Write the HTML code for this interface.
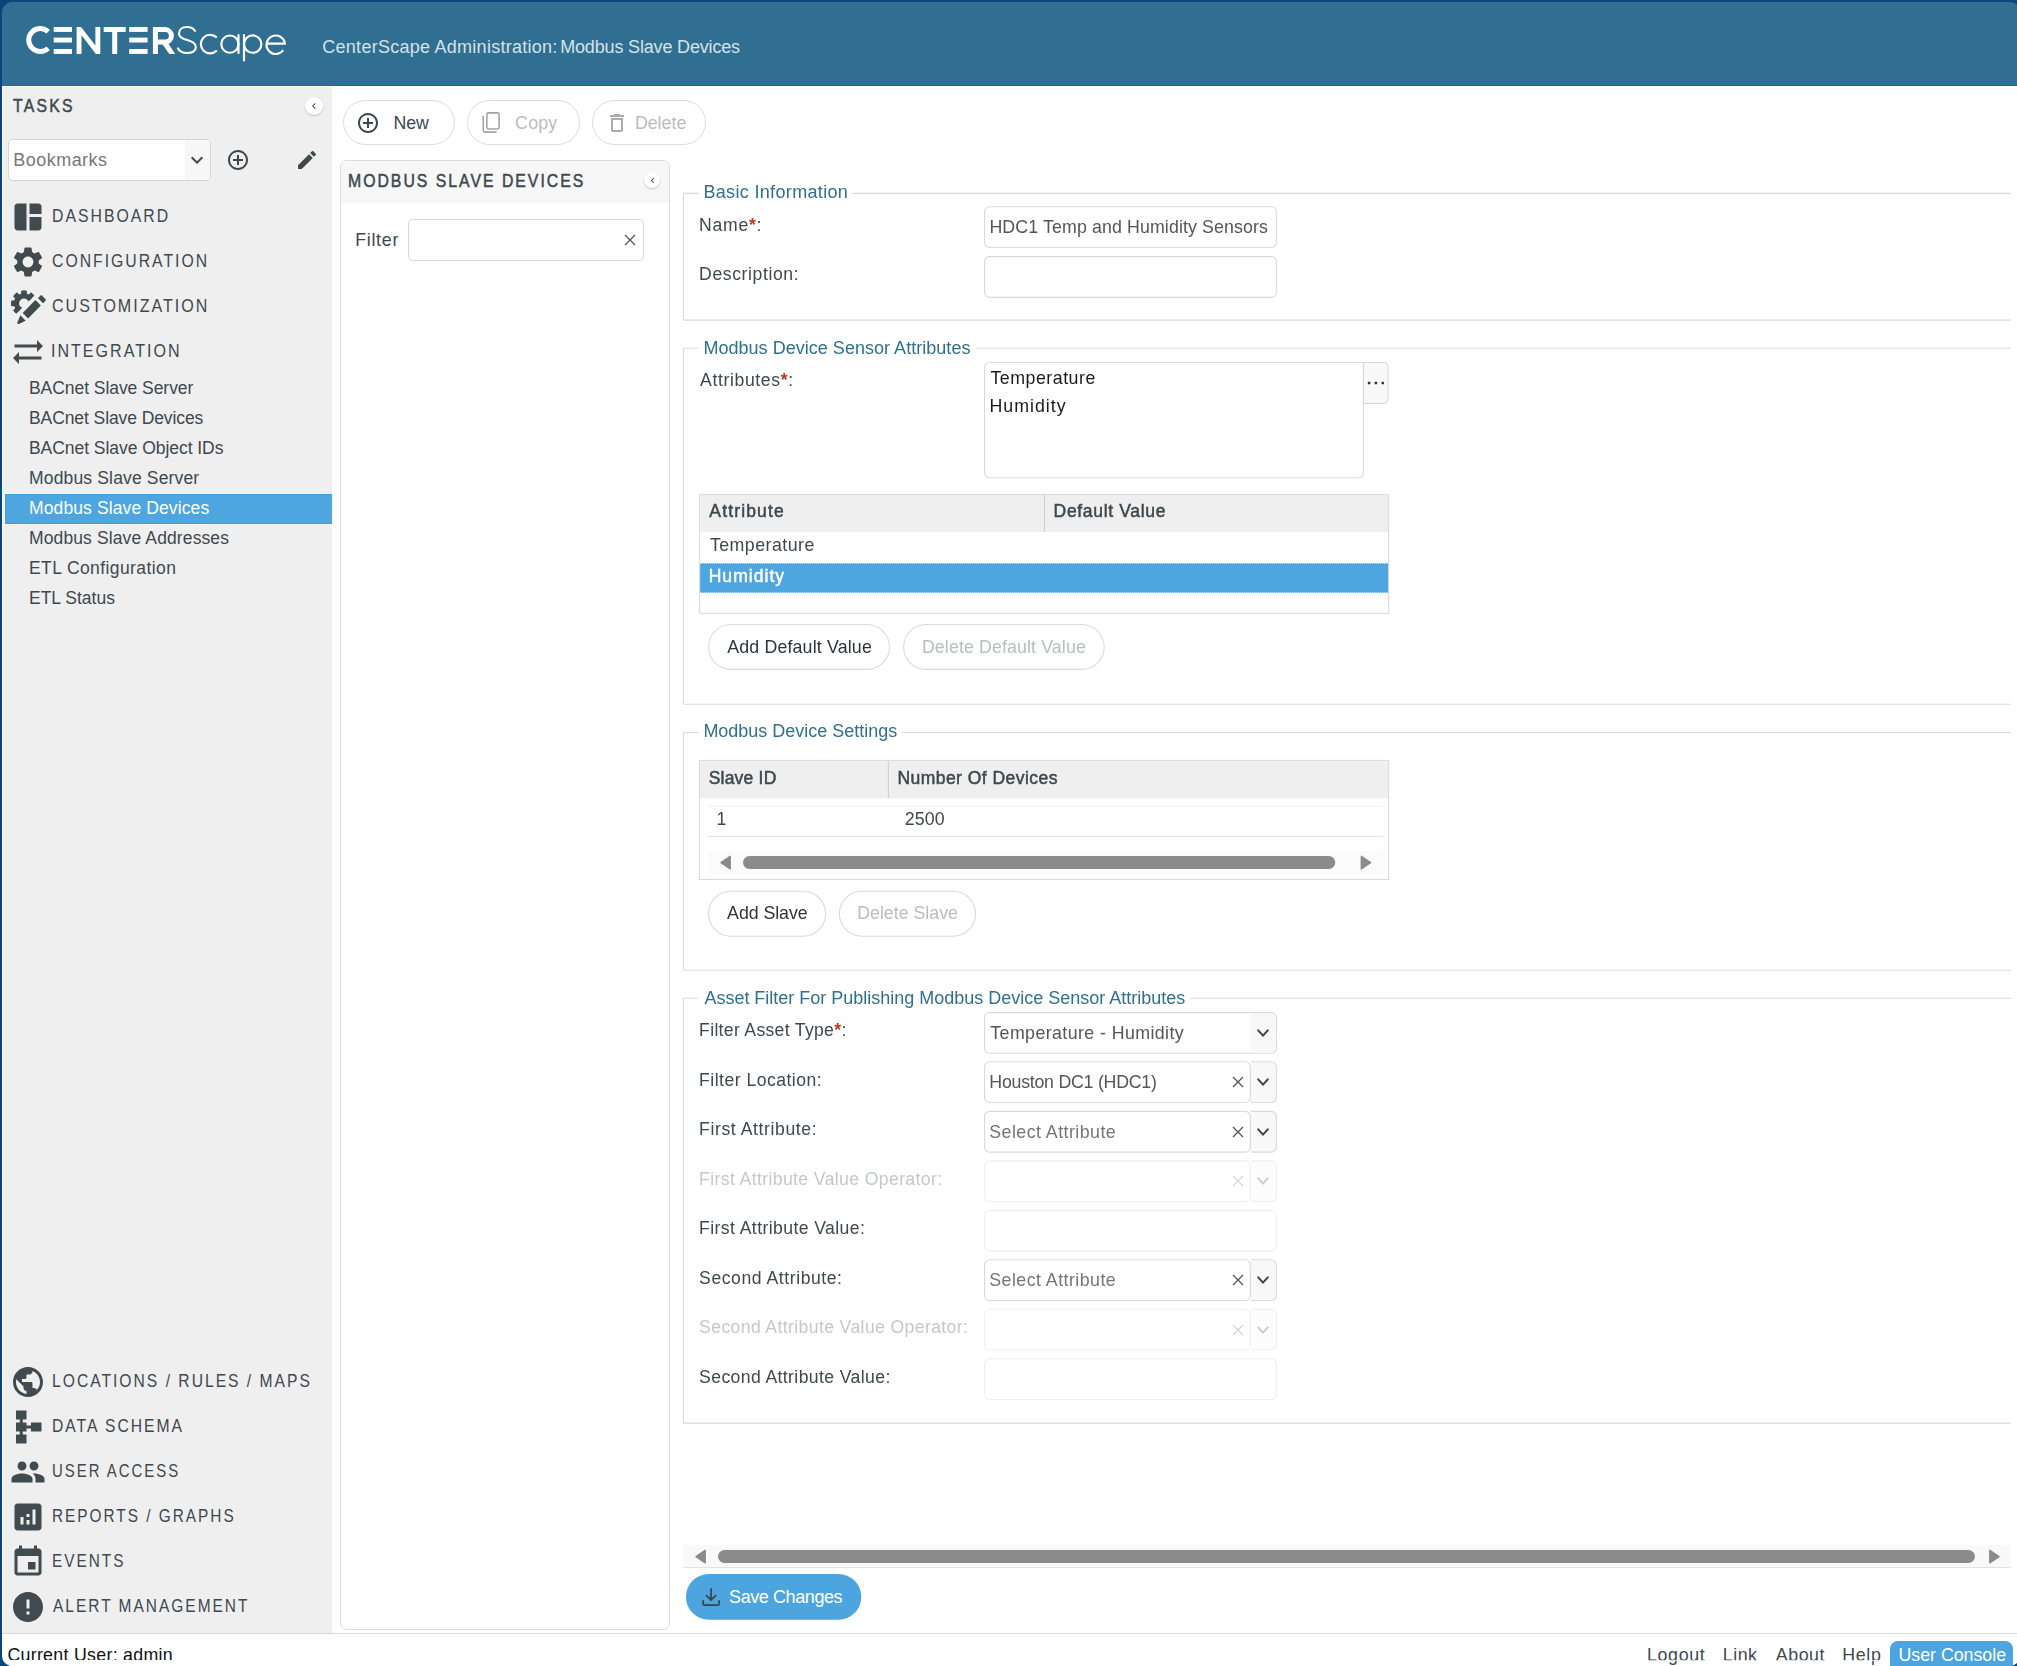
<!DOCTYPE html>
<html>
<head>
<meta charset="utf-8">
<title>CenterScape Administration: Modbus Slave Devices</title>
<style>
*{box-sizing:border-box;margin:0;padding:0}
html,body{width:2017px;height:1666px;overflow:hidden;background:#0b457a;font-family:"Liberation Sans",sans-serif;color:#3d484f}
#frame{position:absolute;left:2px;top:40px;width:2018px;height:1626px;background:#fff;border-radius:0 0 10px 10px}
#app{position:absolute;left:0;top:0;width:2017px;height:1666px;overflow:hidden}
.abs{position:absolute}
.t{position:absolute;white-space:nowrap;line-height:20px}
#hdr{position:absolute;left:2px;top:2px;width:2018px;height:84px;background:#306f91;border-bottom:1px solid #2a6686;border-radius:10px 10px 0 0}
#side{position:absolute;left:2px;top:86px;width:330px;height:1547px;background:#efefef}
.pill{position:absolute;height:45px;border:1px solid #dcdcdc;border-radius:23px;background:#fff}
.inp{position:absolute;border:1px solid #d6d6d6;border-radius:5px;background:#fff}
.req{color:#c03a1e;font-weight:bold}
</style>
</head>
<body>
<div id="frame"></div>
<div id="app">
<div id="hdr"></div>
<svg class="abs" style="left:0;top:0" width="320" height="86" viewBox="0 0 320 86">
<g fill="#fff" stroke="none">
<rect x="53.7" y="27" width="18.3" height="4.9"/><rect x="53.7" y="37.6" width="18.3" height="4.9"/><rect x="53.7" y="49" width="18.3" height="4.9"/>
<path d="M76.6 53.9V27.1h4.5L95.4 45.6V27.1h4.9V53.9h-4.4L81.5 35.3V53.9z"/>
<path d="M103.7 27.1h22v4.9h-8.5v21.9h-5v-21.9h-8.5z"/>
<rect x="129.2" y="27" width="18.4" height="4.9"/><rect x="129.2" y="37.6" width="18.4" height="4.9"/><rect x="129.2" y="49" width="18.4" height="4.9"/>
<path d="M161.8 43.2L167.6 42.4L175.2 53.9H169.3z"/>
</g>
<g fill="none" stroke="#fff">
<path d="M48.2 31.7A11.5 11.5 0 1 0 48.2 48.3" stroke-width="5"/>
<path d="M155.4 53.9V29.6H165.2a6.2 6.2 0 0 1 0 12.4H155.4" stroke-width="5" stroke-linejoin="miter"/>
<g stroke-width="2.15">
<path d="M195.4 31.6C194 28.6 191 27 187 27C182.3 27 179 29.6 179 33.4C179 37.4 182.6 38.8 187.2 40C192.2 41.3 195.8 43 195.8 47C195.8 51 192 53 187.2 53C182.5 53 179 51 177.6 47.6"/>
<path d="M216.8 37.6A9.3 9.3 0 1 0 216.8 50.6"/>
<circle cx="229.9" cy="44.1" r="8.6"/><path d="M238.5 34.3V53.9"/>
<path d="M244 34.3V61.3"/><circle cx="252.7" cy="44.1" r="8.7"/>
<path d="M266.6 43.6H284.9A9.2 9.2 0 1 0 283.2 50.2"/>
</g></g>
</svg>
<div class="t" style="left:322.30px;top:37.00px;font-size:18px;letter-spacing:0.265px;color:#d5e2ea;">CenterScape Administration:</div>
<div class="t" style="left:560.20px;top:37.00px;font-size:18px;letter-spacing:-0.168px;color:#d5e2ea;">Modbus Slave Devices</div>
<div id="side"></div>
<div class="abs" style="left:2px;top:86px;width:330px;height:1px;background:#faf7f5"></div>
<div class="abs" style="left:2px;top:86px;width:1px;height:1547px;background:#fcf9f7"></div>
<div class="t" style="left:12.80px;top:96.00px;font-size:18.6px;letter-spacing:2.586px;transform:scaleX(0.8508);transform-origin:0 0;-webkit-text-stroke:0.5px #3d484f;color:#3d484f;">TASKS</div>
<div class="abs" style="left:305px;top:96.5px;width:18px;height:18px;border-radius:9px;background:#fff;box-shadow:0 1px 2px rgba(0,0,0,.2)"></div>
<svg class="abs" style="left:308px;top:99.5px" width="12" height="12" viewBox="0 0 24 24"><path d="M15.4 7.4L14 6l-6 6 6 6 1.4-1.4L10.8 12z" fill="#3d484f"/></svg>
<div class="inp" style="left:8px;top:139px;width:203px;height:42px;overflow:hidden"><div class="abs" style="left:176px;top:0;width:26px;height:40px;background:#f7f7f7"></div></div>
<div class="t" style="left:13.30px;top:150.00px;font-size:18px;letter-spacing:0.463px;color:#777;">Bookmarks</div>
<svg class="abs" style="left:185px;top:148px" width="24" height="24" viewBox="0 0 24 24"><path d="M16.59 8.59L12 13.17 7.41 8.59 6 10l6 6 6-6z" fill="#3d484f"/></svg>
<svg class="abs" style="left:226px;top:148px" width="24" height="24" viewBox="0 0 24 24"><path d="M13 7h-2v4H7v2h4v4h2v-4h4v-2h-4V7zm-1-5C6.48 2 2 6.48 2 12s4.48 10 10 10 10-4.48 10-10S17.52 2 12 2zm0 18c-4.41 0-8-3.59-8-8s3.59-8 8-8 8 3.59 8 8-3.59 8-8 8z" fill="#3d484f"/></svg>
<svg class="abs" style="left:295px;top:148px" width="24" height="24" viewBox="0 0 24 24"><path d="M3 17.25V21h3.75L17.81 9.94l-3.75-3.75L3 17.25zM20.71 7.04c.39-.39.39-1.02 0-1.41l-2.34-2.34c-.39-.39-1.02-.39-1.41 0l-1.83 1.83 3.75 3.75 1.83-1.83z" fill="#3d484f"/></svg>
<svg class="abs" style="left:10px;top:198.9px" width="36" height="36" viewBox="0 0 24 24"><path d="M11 21H5c-1.1 0-2-.9-2-2V5c0-1.1.9-2 2-2h6v18zm2 0h6c1.1 0 2-.9 2-2v-7h-8v9zm8-11V5c0-1.1-.9-2-2-2h-6v7h8z" fill="#414a4f"/></svg>
<div class="t" style="left:52.11px;top:205.70px;font-size:17.7px;letter-spacing:2.238px;transform:scaleX(0.8936);transform-origin:0 0;color:#3d484f;">DASHBOARD</div>
<svg class="abs" style="left:10px;top:243.9px" width="36" height="36" viewBox="0 0 24 24"><path d="M19.14 12.94c.04-.3.06-.61.06-.94 0-.32-.02-.64-.07-.94l2.03-1.58c.18-.14.23-.41.12-.61l-1.92-3.32c-.12-.22-.37-.29-.59-.22l-2.39.96c-.5-.38-1.03-.7-1.62-.94l-.36-2.54c-.04-.24-.24-.41-.48-.41h-3.84c-.24 0-.43.17-.47.41l-.36 2.54c-.59.24-1.13.57-1.62.94l-2.39-.96c-.22-.08-.47 0-.59.22L2.74 8.87c-.12.21-.08.47.12.61l2.03 1.58c-.05.3-.09.63-.09.94s.02.64.07.94l-2.03 1.58c-.18.14-.23.41-.12.61l1.92 3.32c.12.22.37.29.59.22l2.39-.96c.5.38 1.03.7 1.62.94l.36 2.54c.05.24.24.41.48.41h3.84c.24 0 .44-.17.47-.41l.36-2.54c.59-.24 1.13-.56 1.62-.94l2.39.96c.22.08.47 0 .59-.22l1.92-3.32c.12-.22.07-.47-.12-.61l-2.01-1.58zM12 15.6c-1.98 0-3.6-1.62-3.6-3.6s1.62-3.6 3.6-3.6 3.6 1.62 3.6 3.6-1.62 3.6-3.6 3.6z" fill="#414a4f"/></svg>
<div class="t" style="left:52.11px;top:250.70px;font-size:17.7px;letter-spacing:2.243px;transform:scaleX(0.8917);transform-origin:0 0;color:#3d484f;">CONFIGURATION</div>
<svg class="abs" style="left:6px;top:280px" width="50" height="50" viewBox="6 280 50 50"><defs><clipPath id="gc"><path d="M0 270H59.9L-10 339.9z"/></clipPath></defs><g fill="#414a4f"><g clip-path="url(#gc)"><circle cx="24" cy="303.4" r="10.1"/><rect x="21.2" y="290.5" width="5.6" height="6" rx="0.8" transform="rotate(0 24 303.4)"/><rect x="21.2" y="290.5" width="5.6" height="6" rx="0.8" transform="rotate(45 24 303.4)"/><rect x="21.2" y="290.5" width="5.6" height="6" rx="0.8" transform="rotate(90 24 303.4)"/><rect x="21.2" y="290.5" width="5.6" height="6" rx="0.8" transform="rotate(135 24 303.4)"/><rect x="21.2" y="290.5" width="5.6" height="6" rx="0.8" transform="rotate(180 24 303.4)"/><rect x="21.2" y="290.5" width="5.6" height="6" rx="0.8" transform="rotate(225 24 303.4)"/><rect x="21.2" y="290.5" width="5.6" height="6" rx="0.8" transform="rotate(270 24 303.4)"/><rect x="21.2" y="290.5" width="5.6" height="6" rx="0.8" transform="rotate(315 24 303.4)"/></g><circle cx="24" cy="303.4" r="4.9" fill="#efefef"/><path d="M35.4 299.9L40.8 305.4L28.1 318.6L22.7 313z"/><path d="M40.9 295.2a.5.5 0 0 1 .7 0L45.8 299.6a.5.5 0 0 1 0 .7L43.5 302.9a.5.5 0 0 1 -.7 0L38.3 298.4a.5.5 0 0 1 0 -.7z"/><path d="M20.3 315.3L25.7 320.7L18.9 323.9Q17 324.6 17.4 322.6z"/></g></svg>
<div class="t" style="left:52.09px;top:295.70px;font-size:17.7px;letter-spacing:2.205px;transform:scaleX(0.9070);transform-origin:0 0;color:#3d484f;">CUSTOMIZATION</div>
<svg class="abs" style="left:10px;top:333.9px" width="36" height="36" viewBox="0 0 24 24"><path d="M22 8l-4-4v3H3v2h15v3l4-4zM2 16l4 4v-3h15v-2H6v-3l-4 4z" fill="#414a4f"/></svg>
<div class="t" style="left:51.18px;top:340.70px;font-size:17.7px;letter-spacing:2.203px;transform:scaleX(0.9078);transform-origin:0 0;color:#3d484f;">INTEGRATION</div>
<svg class="abs" style="left:10px;top:1364.2px" width="36" height="36" viewBox="0 0 24 24"><path d="M12 2C6.48 2 2 6.48 2 12s4.48 10 10 10 10-4.48 10-10S17.52 2 12 2zm-1 17.93c-3.95-.49-7-3.85-7-7.93 0-.62.08-1.21.21-1.79L9 15v1c0 1.1.9 2 2 2v1.93zm6.9-2.54c-.26-.81-1-1.39-1.9-1.39h-1v-3c0-.55-.45-1-1-1H8v-2h2c.55 0 1-.45 1-1V7h2c1.1 0 2-.9 2-2v-.41c2.93 1.19 5 4.06 5 7.41 0 2.08-.8 3.97-2.1 5.39z" fill="#414a4f"/></svg>
<div class="t" style="left:52.12px;top:1371.00px;font-size:17.7px;letter-spacing:2.260px;transform:scaleX(0.8849);transform-origin:0 0;color:#3d484f;">LOCATIONS / RULES / MAPS</div>
<svg class="abs" style="left:10px;top:1409.2px" width="36" height="36" viewBox="0 0 24 24"><path d="M14 9v2h-3V9H8.5V7H11V1H4v6h2.5v2H4v6h2.5v2H4v6h7v-6H8.5v-2H11v-2h3v2h7V9h-7z" fill="#414a4f"/></svg>
<div class="t" style="left:52.11px;top:1416.00px;font-size:17.7px;letter-spacing:2.257px;transform:scaleX(0.8862);transform-origin:0 0;color:#3d484f;">DATA SCHEMA</div>
<svg class="abs" style="left:10px;top:1454.0px" width="36" height="36" viewBox="0 0 24 24"><path d="M16 11c1.66 0 2.99-1.34 2.99-3S17.66 5 16 5c-1.66 0-3 1.34-3 3s1.34 3 3 3zm-8 0c1.66 0 2.99-1.34 2.99-3S9.66 5 8 5C6.34 5 5 6.34 5 8s1.34 3 3 3zm0 2c-2.33 0-7 1.17-7 3.5V19h14v-2.5c0-2.33-4.67-3.5-7-3.5zm8 0c-.29 0-.62.02-.97.05 1.16.84 1.97 1.97 1.97 3.45V19h6v-2.5c0-2.33-4.67-3.5-7-3.5z" fill="#414a4f"/></svg>
<div class="t" style="left:52.16px;top:1460.80px;font-size:17.7px;letter-spacing:2.371px;transform:scaleX(0.8435);transform-origin:0 0;color:#3d484f;">USER ACCESS</div>
<svg class="abs" style="left:10px;top:1498.9px" width="36" height="36" viewBox="0 0 24 24"><path d="M19 3H5c-1.1 0-2 .9-2 2v14c0 1.1.9 2 2 2h14c1.1 0 2-.9 2-2V5c0-1.1-.9-2-2-2zM9 17H7v-5h2v5zm4 0h-2v-3h2v3zm0-5h-2v-2h2v2zm4 5h-2V7h2v10z" fill="#414a4f"/></svg>
<div class="t" style="left:52.13px;top:1505.70px;font-size:17.7px;letter-spacing:2.302px;transform:scaleX(0.8688);transform-origin:0 0;color:#3d484f;">REPORTS / GRAPHS</div>
<svg class="abs" style="left:10px;top:1543.9px" width="36" height="36" viewBox="0 0 24 24"><path d="M17 12h-5v5h5v-5zM16 1v2H8V1H6v2H5c-1.11 0-1.99.9-1.99 2L3 19c0 1.1.89 2 2 2h14c1.1 0 2-.9 2-2V5c0-1.1-.9-2-2-2h-1V1h-2zm3 18H5V8h14v11z" fill="#414a4f"/></svg>
<div class="t" style="left:52.13px;top:1550.70px;font-size:17.7px;letter-spacing:2.304px;transform:scaleX(0.8681);transform-origin:0 0;color:#3d484f;">EVENTS</div>
<svg class="abs" style="left:10px;top:1588.9px" width="36" height="36" viewBox="0 0 24 24"><path d="M12 2C6.48 2 2 6.48 2 12s4.48 10 10 10 10-4.48 10-10S17.52 2 12 2zm1 15h-2v-2h2v2zm0-4h-2V7h2v6z" fill="#414a4f"/></svg>
<div class="t" style="left:53.00px;top:1595.70px;font-size:17.7px;letter-spacing:2.287px;transform:scaleX(0.8745);transform-origin:0 0;color:#3d484f;">ALERT MANAGEMENT</div>
<div class="t" style="left:29.00px;top:378.00px;font-size:17.5px;letter-spacing:-0.056px;color:#3d484f;">BACnet Slave Server</div>
<div class="t" style="left:29.00px;top:408.00px;font-size:17.5px;letter-spacing:-0.089px;color:#3d484f;">BACnet Slave Devices</div>
<div class="t" style="left:29.00px;top:438.00px;font-size:17.5px;letter-spacing:-0.050px;color:#3d484f;">BACnet Slave Object IDs</div>
<div class="t" style="left:29.00px;top:468.00px;font-size:17.5px;letter-spacing:0.161px;color:#3d484f;">Modbus Slave Server</div>
<div class="abs" style="left:5px;top:494px;width:327px;height:30px;background:#4da6df;border:1px solid #3d9fdc;border-right:none;box-shadow:0 0 0 1px #fbf5f1"></div>
<div class="t" style="left:29.00px;top:498.00px;font-size:17.5px;letter-spacing:0.116px;color:#fff;">Modbus Slave Devices</div>
<div class="t" style="left:29.00px;top:528.00px;font-size:17.5px;letter-spacing:0.119px;color:#3d484f;">Modbus Slave Addresses</div>
<div class="t" style="left:29.00px;top:558.00px;font-size:17.5px;letter-spacing:0.406px;color:#3d484f;">ETL Configuration</div>
<div class="t" style="left:29.00px;top:588.00px;font-size:17.5px;letter-spacing:0.000px;color:#3d484f;">ETL Status</div>
<div class="pill" style="left:343px;top:100px;width:112px"></div>
<svg class="abs" style="left:356px;top:111px" width="24" height="24" viewBox="0 0 24 24"><path d="M13 7h-2v4H7v2h4v4h2v-4h4v-2h-4V7zm-1-5C6.48 2 2 6.48 2 12s4.48 10 10 10 10-4.48 10-10S17.52 2 12 2zm0 18c-4.41 0-8-3.59-8-8s3.59-8 8-8 8 3.59 8 8-3.59 8-8 8z" fill="#3d484f"/></svg>
<div class="t" style="left:393.60px;top:112.60px;font-size:17.8px;letter-spacing:-0.100px;color:#3d484f;">New</div>
<div class="pill" style="left:467px;top:100px;width:113px"></div>
<svg class="abs" style="left:470px;top:100px" width="60" height="45" viewBox="470 100 60 45"><g fill="none" stroke="#9fa4a8" stroke-width="1.55"><rect x="486.85" y="112.85" width="12.3" height="16.1" rx="1.7"/><path d="M483.25 115.8V130.5a1.6 1.6 0 0 0 1.6 1.6H496.6"/></g></svg>
<div class="t" style="left:515.10px;top:112.50px;font-size:17.8px;letter-spacing:0.200px;color:#b9bdc0;">Copy</div>
<div class="pill" style="left:592px;top:100px;width:114px"></div>
<svg class="abs" style="left:605px;top:111px" width="24" height="24" viewBox="0 0 24 24"><path d="M6 19c0 1.1.9 2 2 2h8c1.1 0 2-.9 2-2V7H6v12zM8 9h8v10H8V9zm7.5-5l-1-1h-5l-1 1H5v2h14V4h-3.5z" fill="#a9adb0"/></svg>
<div class="t" style="left:634.90px;top:112.50px;font-size:17.8px;letter-spacing:0.000px;color:#b9bdc0;">Delete</div>
<div class="abs" style="left:340px;top:160px;width:330px;height:1470px;border:1px solid #dcdcdc;border-radius:7px;background:#fff;overflow:hidden"><div class="abs" style="left:0;top:0;width:100%;height:42px;background:#f7f7f7"></div></div>
<div class="t" style="left:347.91px;top:171.20px;font-size:17.8px;letter-spacing:2.251px;transform:scaleX(0.8886);transform-origin:0 0;-webkit-text-stroke:0.5px #3d484f;color:#3d484f;">MODBUS SLAVE DEVICES</div>
<div class="abs" style="left:644px;top:172px;width:16px;height:16px;border-radius:8px;background:#fff;box-shadow:0 1px 2px rgba(0,0,0,.2)"></div>
<svg class="abs" style="left:646.5px;top:174.5px" width="11" height="11" viewBox="0 0 24 24"><path d="M15.4 7.4L14 6l-6 6 6 6 1.4-1.4L10.8 12z" fill="#3d484f"/></svg>
<div class="t" style="left:355.20px;top:229.70px;font-size:17.8px;letter-spacing:0.720px;color:#3d484f;">Filter</div>
<div class="inp" style="left:408px;top:219px;width:236px;height:42px"></div>
<svg class="abs" style="left:622px;top:232.1px" width="16" height="16" viewBox="0 0 16 16"><path d="M3 3L13 13M13 3L3 13" stroke="#4a5258" stroke-width="1.2" fill="none"/></svg>
<div class="abs" style="left:670px;top:150px;width:1341px;height:1395px;overflow:hidden;will-change:transform"><div class="abs" style="left:-670px;top:-150px;width:2100px;height:1700px">
<svg class="abs" style="left:670px;top:150px" width="1430" height="1400" viewBox="670 150 1430 1400"><path d="M698.5 193.40H683.45V320.10H2100M852.20 193.40H2100" stroke="#dadada" stroke-width="1.1" fill="none"/><path d="M698.5 348.30H683.45V704.20H2100M975.70 348.30H2100" stroke="#dadada" stroke-width="1.1" fill="none"/><path d="M698.5 732.50H683.45V970.30H2100M901.50 732.50H2100" stroke="#dadada" stroke-width="1.1" fill="none"/><path d="M698.5 998.20H683.45V1423.10H2100M1190.40 998.20H2100" stroke="#dadada" stroke-width="1.1" fill="none"/><rect x="984.55" y="206.75" width="291.85" height="40.70" rx="5" fill="#fff" stroke="#dadada" stroke-width="1.1" /><rect x="984.55" y="256.65" width="291.85" height="40.70" rx="5" fill="#fff" stroke="#dadada" stroke-width="1.1" /><path d="M1363.4 362.5H1383.2a5 5 0 0 1 5 5V398.4a5 5 0 0 1 -5 5H1363.4z" fill="#f8f8f8" stroke="#dadada" stroke-width="1.1"/><path d="M989.55 362.5H1363.4V472.8a5 5 0 0 1 -5 5H989.55a5 5 0 0 1 -5 -5V367.5a5 5 0 0 1 5 -5z" fill="#fff" stroke="#dadada" stroke-width="1.1"/><rect x="1367.86" y="381.8" width="2.4" height="2.4" rx="0.5" fill="#2b3338"/><rect x="1374.70" y="381.8" width="2.4" height="2.4" rx="0.5" fill="#2b3338"/><rect x="1381.60" y="381.8" width="2.4" height="2.4" rx="0.5" fill="#2b3338"/><rect x="699.60" y="494.40" width="689.00" height="119.00" rx="0" fill="#fff" stroke="#dadada" stroke-width="1.1" /><rect x="700.15" y="494.95" width="687.90" height="36.85" fill="#efefef"/><path d="M1044.50 495.00L1044.50 531.80" stroke="#cfcfcf" stroke-width="1.1" fill="none"/><rect x="700.15" y="563.00" width="687.90" height="29.90" fill="#4da6df"/><path d="M700.15 563.5H1388M700.15 592.4H1388" stroke="#fff" stroke-opacity=".75" stroke-width="1" stroke-dasharray="1 1" fill="none"/><rect x="708.50" y="624.50" width="181.00" height="44.90" rx="22.45" fill="#fff" stroke="#dadada" stroke-width="1.1" /><rect x="903.60" y="624.50" width="200.60" height="44.90" rx="22.45" fill="#fff" stroke="#dadada" stroke-width="1.1" /><rect x="699.50" y="760.40" width="689.10" height="119.10" rx="0" fill="#fff" stroke="#dadada" stroke-width="1.1" /><rect x="700.05" y="760.95" width="688.00" height="37.35" fill="#efefef"/><path d="M888.40 761.20L888.40 798.30" stroke="#cfcfcf" stroke-width="1.1" fill="none"/><path d="M708.00 806.30L1383.50 806.30" stroke="#f1f1f1" stroke-width="1.1" fill="none"/><path d="M708.00 836.50L1383.50 836.50" stroke="#e4e4e4" stroke-width="1.1" fill="none"/><rect x="708.00" y="851.20" width="675.50" height="22.60" fill="#fbfbfb"/><rect x="743" y="856" width="592.3" height="12.9" rx="6.45" fill="#8b8b8b"/><path d="M730.2 856.3000000000001V868.9L721 862.6z" fill="#8b8b8b" stroke="#8b8b8b" stroke-width="1.4" stroke-linejoin="round"/><path d="M1361.3 856.3000000000001V868.9L1370.5 862.6z" fill="#8b8b8b" stroke="#8b8b8b" stroke-width="1.4" stroke-linejoin="round"/><rect x="708.40" y="891.30" width="117.20" height="44.90" rx="22.45" fill="#fff" stroke="#dadada" stroke-width="1.1" /><rect x="839.40" y="891.30" width="136.20" height="44.90" rx="22.45" fill="#fff" stroke="#dadada" stroke-width="1.1" /><rect x="984.55" y="1012.60" width="291.85" height="40.70" rx="5" fill="#fff" stroke="#dadada" stroke-width="1.1" /><path d="M1251 1013.15H1271.4a4.5 4.5 0 0 1 4.45 4.45V1048.30a4.5 4.5 0 0 1 -4.45 4.45H1251z" fill="#f8f8f8"/><rect x="984.55" y="1061.80" width="265.75" height="40.70" rx="5" fill="#fff" stroke="#dadada" stroke-width="1.1" /><path d="M1251 1061.80H1271.4a5 5 0 0 1 5 5V1097.50a5 5 0 0 1 -5 5H1251" fill="#f8f8f8" stroke="#dadada" stroke-width="1.1"/><rect x="984.55" y="1111.40" width="265.75" height="40.70" rx="5" fill="#fff" stroke="#dadada" stroke-width="1.1" /><path d="M1251 1111.40H1271.4a5 5 0 0 1 5 5V1147.10a5 5 0 0 1 -5 5H1251" fill="#f8f8f8" stroke="#dadada" stroke-width="1.1"/><rect x="984.55" y="1160.90" width="265.75" height="40.70" rx="5" fill="#fff" stroke="#f0f0f0" stroke-width="1.1" /><path d="M1251 1160.90H1271.4a5 5 0 0 1 5 5V1196.60a5 5 0 0 1 -5 5H1251" fill="#fcfcfc" stroke="#f0f0f0" stroke-width="1.1"/><rect x="984.55" y="1210.40" width="291.85" height="40.70" rx="5" fill="#fff" stroke="#efefef" stroke-width="1.1" /><rect x="984.55" y="1259.80" width="265.75" height="40.70" rx="5" fill="#fff" stroke="#dadada" stroke-width="1.1" /><path d="M1251 1259.80H1271.4a5 5 0 0 1 5 5V1295.50a5 5 0 0 1 -5 5H1251" fill="#f8f8f8" stroke="#dadada" stroke-width="1.1"/><rect x="984.55" y="1309.30" width="265.75" height="40.70" rx="5" fill="#fff" stroke="#f0f0f0" stroke-width="1.1" /><path d="M1251 1309.30H1271.4a5 5 0 0 1 5 5V1345.00a5 5 0 0 1 -5 5H1251" fill="#fcfcfc" stroke="#f0f0f0" stroke-width="1.1"/><rect x="984.55" y="1358.80" width="291.85" height="40.70" rx="5" fill="#fff" stroke="#efefef" stroke-width="1.1" /></svg>
<div class="t" style="left:703.40px;top:181.80px;font-size:18px;letter-spacing:0.337px;color:#30708f;">Basic Information</div>
<div class="t" style="left:703.40px;top:337.80px;font-size:18px;letter-spacing:0.030px;color:#30708f;">Modbus Device Sensor Attributes</div>
<div class="t" style="left:703.40px;top:720.80px;font-size:18px;letter-spacing:-0.014px;color:#30708f;">Modbus Device Settings</div>
<div class="t" style="left:704.40px;top:987.70px;font-size:18px;letter-spacing:-0.007px;color:#30708f;">Asset Filter For Publishing Modbus Device Sensor Attributes</div>
<div class="t" style="left:699.10px;top:214.80px;font-size:17.6px;letter-spacing:0.740px;color:#3d484f;">Name<span class="req">*</span>:</div>
<div class="t" style="left:989.40px;top:217.10px;font-size:17.8px;letter-spacing:0.110px;color:#555;">HDC1 Temp and Humidity Sensors</div>
<div class="t" style="left:699.10px;top:263.90px;font-size:17.6px;letter-spacing:0.600px;color:#3d484f;">Description:</div>
<div class="t" style="left:700.10px;top:370.00px;font-size:17.6px;letter-spacing:0.627px;color:#3d484f;">Attributes<span class="req">*</span>:</div>
<div class="t" style="left:990.40px;top:368.10px;font-size:17.8px;letter-spacing:0.510px;color:#1a1a1a;">Temperature</div>
<div class="t" style="left:989.40px;top:395.90px;font-size:17.8px;letter-spacing:1.014px;color:#1a1a1a;">Humidity</div>
<div class="t" style="left:709.30px;top:500.70px;font-size:17.5px;letter-spacing:1.163px;-webkit-text-stroke:0.5px #3d484f;color:#3d484f;">Attribute</div>
<div class="t" style="left:1053.60px;top:500.70px;font-size:17.5px;letter-spacing:0.667px;-webkit-text-stroke:0.5px #3d484f;color:#3d484f;">Default Value</div>
<div class="t" style="left:709.90px;top:535.10px;font-size:17.8px;letter-spacing:0.460px;color:#3d484f;">Temperature</div>
<div class="t" style="left:708.70px;top:566.20px;font-size:17.5px;letter-spacing:1.043px;-webkit-text-stroke:0.5px #fff;color:#fff;">Humidity</div>
<div class="t" style="left:727.20px;top:637.00px;font-size:17.8px;letter-spacing:0.162px;color:#2c353b;">Add Default Value</div>
<div class="t" style="left:921.90px;top:637.00px;font-size:17.8px;letter-spacing:0.111px;color:#b9bdc0;">Delete Default Value</div>
<div class="t" style="left:708.70px;top:767.70px;font-size:17.5px;letter-spacing:0.214px;-webkit-text-stroke:0.5px #3d484f;color:#3d484f;">Slave ID</div>
<div class="t" style="left:897.40px;top:767.70px;font-size:17.5px;letter-spacing:0.462px;-webkit-text-stroke:0.5px #3d484f;color:#3d484f;">Number Of Devices</div>
<div class="t" style="left:716.60px;top:809.30px;font-size:17.8px;letter-spacing:-0.600px;color:#3d484f;">1</div>
<div class="t" style="left:904.80px;top:809.30px;font-size:17.8px;letter-spacing:0.100px;color:#3d484f;">2500</div>
<div class="t" style="left:727.10px;top:902.90px;font-size:17.8px;letter-spacing:-0.062px;color:#2c353b;">Add Slave</div>
<div class="t" style="left:857.20px;top:902.90px;font-size:17.8px;letter-spacing:-0.009px;color:#b9bdc0;">Delete Slave</div>
<div class="t" style="left:699.10px;top:1019.50px;font-size:17.6px;letter-spacing:0.317px;color:#3d484f;">Filter Asset Type<span class="req">*</span>:</div>
<div class="t" style="left:990.30px;top:1022.90px;font-size:17.8px;letter-spacing:0.410px;color:#555;">Temperature - Humidity</div>
<div class="t" style="left:699.10px;top:1069.90px;font-size:17.6px;letter-spacing:0.473px;color:#3d484f;">Filter Location:</div>
<div class="t" style="left:989.30px;top:1072.10px;font-size:17.8px;letter-spacing:-0.253px;color:#555;">Houston DC1 (HDC1)</div>
<div class="t" style="left:699.10px;top:1118.60px;font-size:17.6px;letter-spacing:0.593px;color:#3d484f;">First Attribute:</div>
<div class="t" style="left:989.30px;top:1121.70px;font-size:17.8px;letter-spacing:0.453px;color:#757575;">Select Attribute</div>
<div class="t" style="left:699.10px;top:1168.70px;font-size:17.6px;letter-spacing:0.387px;color:#c4c8cb;">First Attribute Value Operator:</div>
<div class="t" style="left:699.10px;top:1218.10px;font-size:17.6px;letter-spacing:0.414px;color:#3d484f;">First Attribute Value:</div>
<div class="t" style="left:699.10px;top:1267.80px;font-size:17.6px;letter-spacing:0.556px;color:#3d484f;">Second Attribute:</div>
<div class="t" style="left:989.30px;top:1270.10px;font-size:17.8px;letter-spacing:0.453px;color:#757575;">Select Attribute</div>
<div class="t" style="left:699.10px;top:1317.10px;font-size:17.6px;letter-spacing:0.384px;color:#c4c8cb;">Second Attribute Value Operator:</div>
<div class="t" style="left:699.10px;top:1366.60px;font-size:17.6px;letter-spacing:0.391px;color:#3d484f;">Second Attribute Value:</div>
<svg class="abs" style="left:1254px;top:1027.0px" width="18" height="12" viewBox="0 0 18 12"><path d="M4.2 3.3L9 8.6L13.8 3.3" stroke="#384249" stroke-width="2" fill="none" stroke-linecap="round" stroke-linejoin="miter"/></svg>
<svg class="abs" style="left:1254px;top:1076.2px" width="18" height="12" viewBox="0 0 18 12"><path d="M4.2 3.3L9 8.6L13.8 3.3" stroke="#384249" stroke-width="2" fill="none" stroke-linecap="round" stroke-linejoin="miter"/></svg>
<svg class="abs" style="left:1229.9px;top:1074.2px" width="16" height="16" viewBox="0 0 16 16"><path d="M3 3L13 13M13 3L3 13" stroke="#4a5258" stroke-width="1.2" fill="none"/></svg>
<svg class="abs" style="left:1254px;top:1125.8000000000002px" width="18" height="12" viewBox="0 0 18 12"><path d="M4.2 3.3L9 8.6L13.8 3.3" stroke="#384249" stroke-width="2" fill="none" stroke-linecap="round" stroke-linejoin="miter"/></svg>
<svg class="abs" style="left:1229.9px;top:1123.8000000000002px" width="16" height="16" viewBox="0 0 16 16"><path d="M3 3L13 13M13 3L3 13" stroke="#4a5258" stroke-width="1.2" fill="none"/></svg>
<svg class="abs" style="left:1254px;top:1175.3000000000002px" width="18" height="12" viewBox="0 0 18 12"><path d="M4.2 3.3L9 8.6L13.8 3.3" stroke="#c9cdd0" stroke-width="2" fill="none" stroke-linecap="round" stroke-linejoin="miter"/></svg>
<svg class="abs" style="left:1229.9px;top:1173.3000000000002px" width="16" height="16" viewBox="0 0 16 16"><path d="M3 3L13 13M13 3L3 13" stroke="#d3d6d8" stroke-width="1.2" fill="none"/></svg>
<svg class="abs" style="left:1254px;top:1274.2px" width="18" height="12" viewBox="0 0 18 12"><path d="M4.2 3.3L9 8.6L13.8 3.3" stroke="#384249" stroke-width="2" fill="none" stroke-linecap="round" stroke-linejoin="miter"/></svg>
<svg class="abs" style="left:1229.9px;top:1272.2px" width="16" height="16" viewBox="0 0 16 16"><path d="M3 3L13 13M13 3L3 13" stroke="#4a5258" stroke-width="1.2" fill="none"/></svg>
<svg class="abs" style="left:1254px;top:1323.7px" width="18" height="12" viewBox="0 0 18 12"><path d="M4.2 3.3L9 8.6L13.8 3.3" stroke="#c9cdd0" stroke-width="2" fill="none" stroke-linecap="round" stroke-linejoin="miter"/></svg>
<svg class="abs" style="left:1229.9px;top:1321.7px" width="16" height="16" viewBox="0 0 16 16"><path d="M3 3L13 13M13 3L3 13" stroke="#d3d6d8" stroke-width="1.2" fill="none"/></svg>
</div></div>
<div class="abs" style="left:683px;top:1545px;width:1328px;height:22px;background:#f9f9f9"></div>
<div class="abs" style="left:683px;top:1567px;width:1328px;height:1px;background:#e2e2e2"></div>
<div class="abs" style="left:718px;top:1550px;width:1257px;height:13px;border-radius:6.5px;background:#8b8b8b"></div>
<svg class="abs" style="left:683px;top:1540px" width="1328" height="30" viewBox="683 1540 1328 30"><path d="M705.2 1550.3V1562.8999999999999L696 1556.6z" fill="#8b8b8b" stroke="#8b8b8b" stroke-width="1.4" stroke-linejoin="round"/><path d="M1989.8 1550.3V1562.8999999999999L1999 1556.6z" fill="#8b8b8b" stroke="#8b8b8b" stroke-width="1.4" stroke-linejoin="round"/></svg>
<svg class="abs" style="left:680px;top:1570px" width="190" height="54" viewBox="680 1570 190 54"><rect x="685.95" y="1573.9" width="175.35" height="45.9" rx="22.95" fill="#4ca5de"/></svg>
<svg class="abs" style="left:695px;top:1580px" width="32" height="32" viewBox="695 1580 32 32"><path d="M711.05 1588.2V1599.8M706 1595.1L711.05 1600.1L716.1 1595.1M703.15 1600.2V1603.7a1.5 1.5 0 0 0 1.5 1.5H717.6a1.5 1.5 0 0 0 1.5 -1.5V1600.2" stroke="#38434a" stroke-width="1.75" fill="none"/></svg>
<div class="t" style="left:729.10px;top:1586.80px;font-size:18px;letter-spacing:-0.418px;color:#fff;">Save Changes</div>
<div class="abs" style="left:2px;top:1633px;width:2018px;height:1px;background:#d9d9d9"></div>
<div class="t" style="left:7.40px;top:1644.60px;font-size:17.8px;letter-spacing:0.289px;color:#111;">Current User: admin</div>
<div class="t" style="left:1647.00px;top:1644.60px;font-size:17.8px;letter-spacing:0.660px;color:#3d484f;">Logout</div>
<div class="t" style="left:1722.70px;top:1644.60px;font-size:17.8px;letter-spacing:0.567px;color:#3d484f;">Link</div>
<div class="t" style="left:1775.80px;top:1644.60px;font-size:17.8px;letter-spacing:0.550px;color:#3d484f;">About</div>
<div class="t" style="left:1842.30px;top:1644.60px;font-size:17.8px;letter-spacing:0.667px;color:#3d484f;">Help</div>
<div class="abs" style="left:1890px;top:1641px;width:123px;height:40px;border-radius:8px;background:#4ca5de"></div>
<div class="t" style="left:1898.50px;top:1644.60px;font-size:17.8px;letter-spacing:-0.018px;color:#fff;">User Console</div>
<div class="abs" style="left:9px;top:1660px;width:1593px;height:6px;background:#fff"></div>
<div class="abs" style="left:1602px;top:1660px;width:288px;height:1px;background:rgba(255,255,255,.75)"></div>
</div>
</body>
</html>
